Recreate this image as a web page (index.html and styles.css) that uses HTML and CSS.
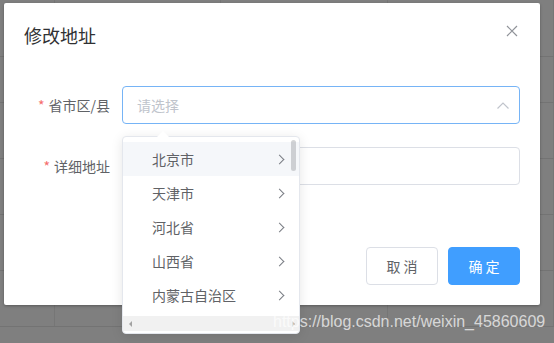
FILE: index.html
```html
<!DOCTYPE html>
<html lang="zh-CN">
<head>
    <meta charset="UTF-8">
    <meta name="viewport" content="width=device-width, initial-scale=1.0">
    <title>修改地址</title>
    <link rel="stylesheet" href="styles.css">
</head>
<body>
    <div class="page">
        <div class="bg-row head"><div class="cell"></div><div class="cell"></div><div class="cell"></div><div class="cell"></div></div>
        <div class="bg-row first"><div class="cell"></div><div class="cell"></div><div class="cell"></div><div class="cell"></div></div>
        <div class="bg-row"><div class="cell"></div><div class="cell"></div><div class="cell"></div><div class="cell"></div></div>
        <div class="bg-row"><div class="cell"></div><div class="cell"></div><div class="cell"></div><div class="cell"></div></div>
        <div class="bg-row"><div class="cell"></div><div class="cell"></div><div class="cell"></div><div class="cell"></div></div>
        <div class="bg-row"><div class="cell"></div><div class="cell"></div><div class="cell"></div><div class="cell"></div></div>
    </div>
    <div class="modal-mask"></div>

    <div class="dialog">
        <div class="dialog-header">
            <span class="dialog-title">修改地址</span>
            <button class="dialog-close" aria-label="关闭">
                <svg width="12" height="12" viewBox="0 0 12 12"><path d="M1 1 L11 11 M11 1 L1 11" stroke="#909399" stroke-width="1.2" fill="none"/></svg>
            </button>
        </div>
        <div class="dialog-body">
            <div class="form-item">
                <label class="form-label required">省市区/县</label>
                <div class="form-control">
                    <div class="input focused">
                        <span class="placeholder">请选择</span>
                        <svg class="input-arrow" width="12" height="7" viewBox="0 0 12 7"><path d="M0.5 6.5 L6 1 L11.5 6.5" stroke="#c0c4cc" stroke-width="1.2" fill="none"/></svg>
                    </div>
                </div>
            </div>
            <div class="form-item">
                <label class="form-label required">详细地址</label>
                <div class="form-control">
                    <div class="input"></div>
                </div>
            </div>
        </div>
        <div class="dialog-footer">
            <button class="btn">取 消</button>
            <button class="btn primary">确 定</button>
        </div>
    </div>

    <div class="cascader-popper">
        <div class="popper-arrow"></div>
        <ul class="cascader-menu">
            <li class="cascader-node hover">北京市<span class="node-arrow"></span></li>
            <li class="cascader-node">天津市<span class="node-arrow"></span></li>
            <li class="cascader-node">河北省<span class="node-arrow"></span></li>
            <li class="cascader-node">山西省<span class="node-arrow"></span></li>
            <li class="cascader-node">内蒙古自治区<span class="node-arrow"></span></li>
        </ul>
        <div class="scroll-thumb"></div>
        <div class="hscroll">
            <span class="hscroll-btn left"></span>
            <span class="hscroll-btn right"></span>
        </div>
    </div>

    <div class="watermark">https://blog.csdn.net/weixin_45860609</div>
</body>
</html>
```

FILE: styles.css
```css
body {
    margin: 0;
    width: 554px;
    height: 343px;
    overflow: hidden;
    background: #fff;
    font-family: "Noto Sans CJK SC", "Liberation Sans", sans-serif;
    position: relative;
}
.page {
    display: flex;
    flex-direction: column;
}
.bg-row {
    display: flex;
    height: 55px;
    border-bottom: 1px solid #e6e6e6;
}
.bg-row.head {
    height: 56px;
}
.bg-row.first {
    height: 45px;
}
.cell {
    width: 166px;
    border-right: 1px solid #ececec;
}
.cell:first-child {
    width: 54px;
}
.modal-mask {
    position: absolute;
    inset: 0;
    background: rgba(0, 0, 0, 0.5);
}
.dialog {
    position: absolute;
    left: 4px;
    top: 3px;
    width: 536px;
    background: #fff;
    border-radius: 2px;
    box-shadow: 0 1px 3px rgba(0, 0, 0, 0.3);
}
.dialog-header {
    padding: 20px 20px 10px;
    display: flex;
    justify-content: space-between;
    align-items: flex-start;
}
.dialog-title {
    font-size: 18px;
    line-height: 24px;
    color: #303133;
}
.dialog-close {
    border: 0;
    background: none;
    padding: 2px;
    margin: 0;
    width: 16px;
    height: 16px;
    display: flex;
    align-items: center;
    justify-content: center;
    cursor: pointer;
}
.dialog-body {
    padding: 29px 20px 30px;
}
.form-item {
    display: flex;
    align-items: center;
    margin-bottom: 23px;
}
.form-item:last-child {
    margin-bottom: 22px;
}
.form-label {
    width: 98px;
    padding-right: 12px;
    box-sizing: border-box;
    text-align: right;
    font-size: 14px;
    color: #606266;
    line-height: 38px;
}
.form-label.required::before {
    content: "*";
    color: #f56c6c;
    margin-right: 4px;
}
.form-control {
    flex: 1;
}
.input {
    height: 38px;
    box-sizing: border-box;
    border: 1px solid #dcdfe6;
    border-radius: 4px;
    display: flex;
    align-items: center;
    padding: 0 10px 0 14px;
}
.input.focused {
    border-color: #76b4f6;
}
.placeholder {
    flex: 1;
    font-size: 14px;
    color: #c0c4cc;
}
.dialog-footer {
    padding: 10px 20px 20px;
    display: flex;
    justify-content: flex-end;
    gap: 10px;
}
.btn {
    width: 72px;
    height: 38px;
    border: 1px solid #dcdfe6;
    border-radius: 4px;
    background: #fff;
    color: #606266;
    font-family: "Noto Sans CJK SC", sans-serif;
    font-size: 14px;
    padding: 0;
    cursor: pointer;
}
.btn.primary {
    background: #409eff;
    border-color: #409eff;
    color: #fff;
}
.cascader-popper {
    position: absolute;
    left: 122px;
    top: 136px;
    width: 178px;
    height: 198px;
    box-sizing: border-box;
    background: #fff;
    border: 1px solid #e4e7ed;
    border-radius: 4px;
    box-shadow: 0 2px 12px rgba(0, 0, 0, 0.1);
}
.popper-arrow {
    position: absolute;
    left: 34px;
    top: -6px;
    width: 0;
    height: 0;
    border-left: 6px solid transparent;
    border-right: 6px solid transparent;
    border-bottom: 6px solid #fff;
}
.cascader-menu {
    list-style: none;
    margin: 0;
    padding: 5px 0 0;
}
.cascader-node {
    height: 34px;
    line-height: 34px;
    padding: 0 14px 0 29px;
    font-size: 14px;
    color: #606266;
    display: flex;
    justify-content: space-between;
    align-items: center;
}
.cascader-node.hover {
    background: #f5f7fa;
}
.node-arrow {
    width: 6px;
    height: 6px;
    border-right: 1px solid #7a7d84;
    border-top: 1px solid #7a7d84;
    transform: rotate(45deg);
    margin-right: 2px;
}
.scroll-thumb {
    position: absolute;
    right: 3px;
    top: 3px;
    width: 5px;
    height: 31px;
    border-radius: 3px;
    background: rgba(144, 147, 153, 0.4);
}
.hscroll {
    position: absolute;
    left: 0;
    right: 0;
    top: 179px;
    height: 15px;
    background: #f1f1f1;
    display: flex;
    justify-content: space-between;
    align-items: center;
    padding: 0 4px 0 6px;
}
.hscroll-btn {
    width: 0;
    height: 0;
    border-top: 3px solid transparent;
    border-bottom: 3px solid transparent;
}
.hscroll-btn.left {
    border-right: 3px solid #a3a3a3;
}
.hscroll-btn.right {
    border-left: 3px solid #a3a3a3;
}
.watermark {
    position: absolute;
    left: 273px;
    top: 313px;
    font-family: "Liberation Sans", Arial, sans-serif;
    font-size: 16px;
    color: rgba(255, 255, 255, 0.7);
    white-space: nowrap;
}
```
